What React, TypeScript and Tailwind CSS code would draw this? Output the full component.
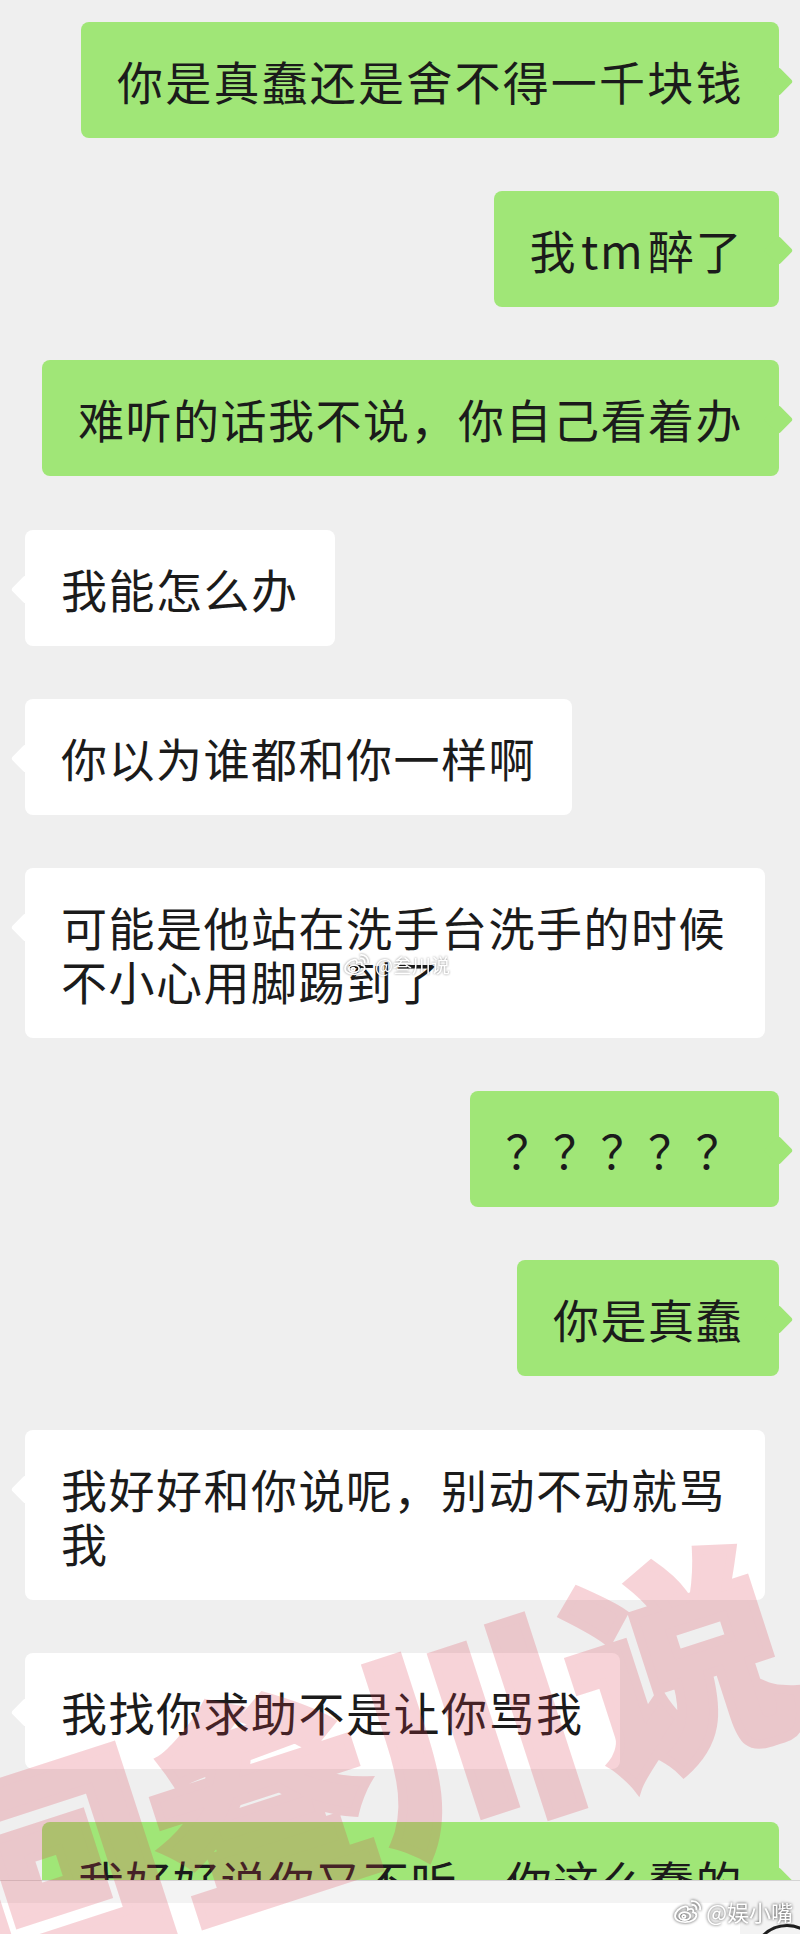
import clsx from "clsx"

type Msg = { text: React.ReactNode; me: boolean; wide?: boolean }

const messages: Msg[] = [
    { text: "你是真蠢还是舍不得一千块钱", me: true, wide: true },
    {
        text: (
            <>
                我<span className="mx-[4px]">tm</span>醉了
            </>
        ),
        me: true,
    },
    { text: "难听的话我不说，你自己看着办", me: true },
    { text: "我能怎么办", me: false },
    { text: "你以为谁都和你一样啊", me: false },
    { text: "可能是他站在洗手台洗手的时候不小心用脚踢到了", me: false },
    { text: "？？？？？", me: true },
    { text: "你是真蠢", me: true },
    { text: "我好好和你说呢，别动不动就骂我", me: false },
    { text: "我找你求助不是让你骂我", me: false },
    { text: "我好好说你又不听，你这么蠢的", me: true },
]

function WeiboLogo({ className }: { className?: string }) {
    return (
        <svg viewBox="0 0 32 28" className={className} fill="none" stroke="currentColor" strokeWidth="2" strokeLinecap="round">
            <path d="M13 9C7 10 2 15 2 19.5 2 23.5 7 26 13 26c7 0 12-3.5 12-7.5 0-2-1.5-3-3.5-3.2 1-2.8-1-4.3-4-3.2l-1.6.6c.3-2.7-.9-4-2.9-3.7z" />
            <ellipse cx="12.5" cy="19.5" rx="6" ry="4.2" />
            <circle cx="11.5" cy="20" r="1.7" />
            <path d="M20 3.5a8 8 0 0 1 9 9" />
            <path d="M20.5 7.5a4 4 0 0 1 4.5 4.5" />
        </svg>
    )
}

function Bubble({ msg }: { msg: Msg }) {
    return (
        <div className={clsx("flex flex-none", msg.me ? "justify-end" : "justify-start")}>
            <div
                className={clsx(
                    "relative max-w-[740px] rounded-[8px] px-[36px] py-[31px] text-[46px] leading-[54px] tracking-[1.5px]",
                    msg.me ? "bg-[#a0e677]" : "bg-white",
                    msg.wide && "w-[698px] text-justify [text-align-last:justify]"
                )}>
                <span
                    className={clsx(
                        "absolute top-[49px] h-[21px] w-[21px] rotate-45 rounded-[3px]",
                        msg.me ? "right-[-10px] bg-[#a0e677]" : "left-[-10px] bg-white"
                    )}
                />
                <p className="relative">{msg.text}</p>
            </div>
        </div>
    )
}

export default function App() {
    return (
        <div className="relative flex h-[1934px] w-full flex-col overflow-hidden bg-[#efefef] font-['Noto_Sans_CJK_SC',sans-serif] text-[#1b1b1b]">
            <div className="flex min-h-0 flex-1 flex-col gap-[53.2px] overflow-hidden pl-[25px] pr-[21px] pt-[22px]">
                {messages.map((m, i) => (
                    <Bubble key={i} msg={m} />
                ))}
            </div>

            {/* input bar, mostly cut off */}
            <div className="flex h-[54px] flex-none items-start gap-[12px] border-t border-[#d4d4d4] bg-[#f3f3f3] pt-[22px]">
                <div className="h-[60px] flex-1 rounded-r-[8px] bg-white" />
                <div className="mr-[-22px] mt-[21px] h-[70px] w-[70px] flex-none rounded-full border-[3px] border-[#1e1e1e]" />
            </div>

            {/* big watermark */}
            <div className="pointer-events-none absolute left-[-79px] top-[1645px] flex h-[220px] w-[880px] rotate-[-18deg] items-center justify-center opacity-[0.22]">
                <span className="whitespace-nowrap text-[220px] font-black leading-none text-[#dc3c50] [-webkit-text-stroke:9px_#dc3c50]">
                    回叁川说
                </span>
            </div>

            {/* small watermark over the message */}
            <div className="pointer-events-none absolute left-[343px] top-[952px] flex items-center gap-[4px] text-white drop-shadow-[0_0_1px_rgba(0,0,0,0.45)]">
                <WeiboLogo className="h-[24px] w-[28px]" />
                <span className="text-[19px] leading-none">@叁川说</span>
            </div>

            <div className="pointer-events-none absolute bottom-[10px] right-[7px] flex items-center gap-[3px] text-white drop-shadow-[0_0_1.5px_rgba(0,0,0,0.75)]">
                <WeiboLogo className="h-[26px] w-[30px]" />
                <span className="text-[22px] leading-none">@娱小嘴</span>
            </div>
        </div>
    )
}
